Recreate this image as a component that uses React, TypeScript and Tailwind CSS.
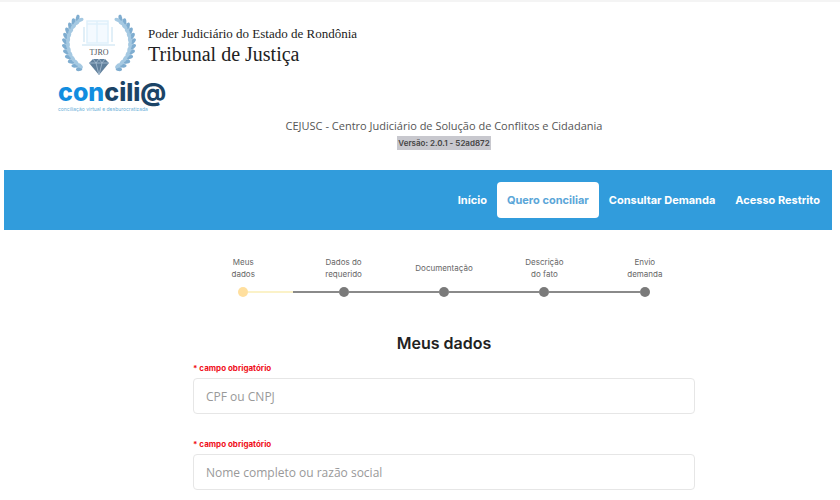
import React from "react";
import { clsx } from "clsx";

const NAV_ITEMS = ["Início", "Quero conciliar", "Consultar Demanda", "Acesso Restrito"];

const STEPS = [
  ["Meus", "dados"],
  ["Dados do", "requerido"],
  ["Documentação"],
  ["Descrição", "do fato"],
  ["Envio", "demanda"],
];

const LEAVES = Array.from({ length: 12 }, (_, i) => i);

const Crest = () => (
  <svg viewBox="0 0 74 64" className="h-16 w-[74px]" role="img" aria-label="TJRO">
    {/* laurel, one side mirrored on the other */}
    {[1, -1].map((side) => (
      <g key={side} transform={side === 1 ? undefined : "translate(74 0) scale(-1 1)"}>
        <path d="M17 4 C-1 18 -1 42 19 55" fill="none" stroke="#a9c9e0" strokeWidth="3" />
        {LEAVES.map((i) => {
          const angle = ((236 - i * 10) * Math.PI) / 180;
          const x = 35 + 31 * Math.cos(angle);
          const y = 29 + 30 * Math.sin(angle);
          const turn = 58 - i * 10;
          return (
            <g key={i} transform={`translate(${x} ${y}) rotate(${turn - 20})`}>
              <ellipse cx="-2" cy="0" rx="1.8" ry="3.2" transform="rotate(-28)" fill="#7fadd0" />
              <ellipse cx="2" cy="0" rx="1.8" ry="3.2" transform="rotate(28)" fill="#a5c9e2" />
            </g>
          );
        })}
      </g>
    ))}
    <path d="M25 7h21v22H25zM35 7v22M25 10h21" fill="#f4faff" stroke="#e0f1fb" strokeWidth="1.5" />
    <path d="M22 13v15M50 13v15M20 31h33" fill="none" stroke="#c3dff0" />
    <text x="37" y="41" textAnchor="middle" fontSize="8" fill="#4d565e" className="font-['Liberation_Serif',serif]">
      TJRO
    </text>
    <path d="M31 45h12l4 4-10 12-10-12z" fill="#607f9b" />
    <path d="M27 49h20M31 45l3 4 3-4 3 4 3-4M34 49l3 12 3-12" fill="none" stroke="#a9c0d4" strokeWidth=".8" />
  </svg>
);

const Header = () => (
  <header className="pt-3">
    <div className="flex items-start pl-[58px]">
      <div className="flex w-[90px] flex-col">
        <div className="pl-1">
          <Crest />
        </div>
        <div className="text-[25px] leading-7 font-extrabold whitespace-nowrap text-[#1c4467]">
          <span className="text-[#128ddf]">con</span>cili@
        </div>
        <p className="text-[5px] leading-[6px] whitespace-nowrap text-[#6bafd8]">
          conciliação virtual e desburocratizada
        </p>
      </div>
      <div className="pt-2.5 font-['Liberation_Serif',serif] text-[#222]">
        <p className="text-[13px] leading-5">Poder Judiciário do Estado de Rondônia</p>
        <p className="text-[20px] leading-5">Tribunal de Justiça</p>
      </div>
    </div>
    <div className="flex flex-col items-center pt-1 pb-5 pl-12">
      <p className="font-['Open_Sans',sans-serif] text-[11px] leading-5 text-[#555]">
        CEJUSC - Centro Judiciário de Solução de Conflitos e Cidadania
      </p>
      <p className="bg-[#c8c8ce] px-px text-[8px] leading-3.5 font-semibold text-[#444]">Versão: 2.0.1 - 52ad872</p>
    </div>
  </header>
);

const NavBar = () => (
  <nav className="mr-2 ml-1 flex h-[60px] items-center justify-end bg-[#319cdc] pr-0.5">
    {NAV_ITEMS.map((item) => (
      <a
        key={item}
        href="#"
        className={clsx(
          "rounded px-2.5 text-[11px] leading-9 font-bold",
          item === "Quero conciliar" ? "bg-white text-[#5ba6d8]" : "text-white"
        )}
      >
        {item}
      </a>
    ))}
  </nav>
);

const Stepper = () => (
  <ol className="mx-auto flex w-[64%] max-w-[502px] pt-[26px]">
    {STEPS.map((lines, i) => (
      <li key={lines[0]} className="flex flex-1 flex-col items-center">
        <div className="flex h-6 flex-col justify-center text-center text-[8px] leading-3 text-[#666]">
          {lines.map((line) => (
            <span key={line}>{line}</span>
          ))}
        </div>
        <div className="mt-[7px] flex w-full items-center">
          <span className={clsx("h-0.5 flex-1", i > 0 && "bg-[#8a8a8a]")} />
          <span className={clsx("size-2.5 rounded-full", i === 0 ? "bg-[#ffdf9e]" : "bg-[#7a7a7a]")} />
          <span className={clsx("h-0.5 flex-1", i === 0 ? "bg-[#fbf2c8]" : i < 4 && "bg-[#8a8a8a]")} />
        </div>
      </li>
    ))}
  </ol>
);

interface FieldProps {
  id: string;
  placeholder: string;
}

const Field = ({ id, placeholder }: FieldProps) => (
  <div>
    <label htmlFor={id} className="block text-[8px] leading-3 font-bold text-[#f01020]">
      * campo obrigatório
    </label>
    <input
      id={id}
      placeholder={placeholder}
      className="mt-1 h-9 w-full rounded border border-[#e6e6e6] px-3 font-['Open_Sans',sans-serif] text-[12px] text-[#555] placeholder:text-[#999]"
    />
  </div>
);

const App = () => (
  <div className="border-t-2 border-[#f4f4f4] bg-white font-[Inter,sans-serif]">
    <Header />
    <NavBar />
    <main className="pl-12">
      <Stepper />
      <h1 className="pt-[34px] text-center text-[16px] leading-6 font-semibold text-[#222]">Meus dados</h1>
      <form className="mx-auto flex w-[64%] max-w-[502px] flex-col gap-6 pt-[7px] pb-2">
        <Field id="documento" placeholder="CPF ou CNPJ" />
        <Field id="nome" placeholder="Nome completo ou razão social" />
      </form>
    </main>
  </div>
);

export default App;
